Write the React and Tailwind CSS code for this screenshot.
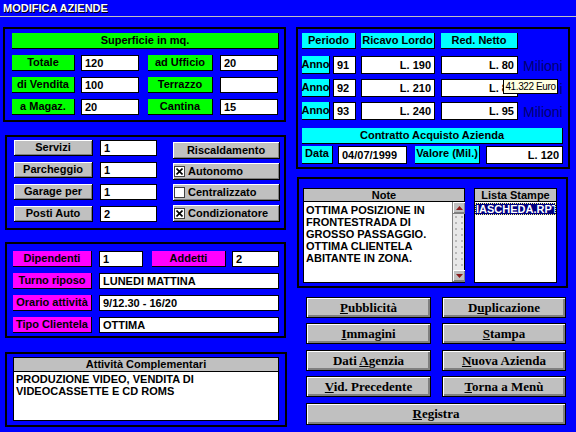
// Modifica Aziende — Win3.x style data entry form
const sans = "font-['Liberation_Sans',Arial,sans-serif]"
const serif = "font-['Liberation_Serif','Times_New_Roman',serif]"

function Tag({ className = '', children }) {
  return (
    <div className={`flex items-center justify-center border-r border-b border-black text-[11px] font-bold leading-none text-black whitespace-nowrap ${className}`}>
      {children}
    </div>
  )
}

function Raised({ className = '', children }) {
  return (
    <div className={`flex items-center bg-[#c0c0c0] border-r border-b border-black shadow-[inset_1px_1px_0_#fff,inset_-1px_-1px_0_#808080] text-[11px] font-bold leading-none text-black whitespace-nowrap ${className}`}>
      {children}
    </div>
  )
}

function Field({ className = '', right = false, children }) {
  return (
    <div className={`flex items-center bg-white border border-black px-[3px] text-[11px] font-bold leading-none text-black whitespace-nowrap overflow-hidden ${right ? 'justify-end' : ''} ${className}`}>
      {children}
    </div>
  )
}

function Check({ on }) {
  return (
    <div className="w-[11px] h-[11px] bg-white border border-[#404040] flex items-center justify-center mr-[3px]">
      {on && (
        <svg width="7" height="7" viewBox="0 0 7 7">
          <path d="M0.5 0.5 L6.5 6.5 M6.5 0.5 L0.5 6.5" stroke="#000" strokeWidth="1.6" />
        </svg>
      )}
    </div>
  )
}

function Btn({ className = '', children }) {
  return (
    <div className={`h-[21px] flex items-center justify-center bg-[#c0c0c0] border border-black shadow-[inset_1px_1px_0_#fff,inset_-2px_-2px_0_#808080] text-[13px] font-bold text-black ${serif} ${className}`}>
      <span>{children}</span>
    </div>
  )
}

function Arrow({ up }) {
  return (
    <div className="w-[12px] h-[12px] bg-[#c0c0c0] border-b border-[#808080] shadow-[inset_1px_1px_0_#fff,inset_-1px_-1px_0_#808080] flex items-center justify-center">
      <svg width="7" height="4" viewBox="0 0 7 4">
        <polygon points={up ? '0,4 7,4 3.5,0' : '0,0 7,0 3.5,4'} fill="#8b1a1a" />
      </svg>
    </div>
  )
}

export default function App() {
  return (
    <div className={`relative w-[576px] h-[432px] overflow-hidden bg-[#0000ff] ${sans}`}>
      {/* Title */}
      <div className="h-[16px] pl-[3px] flex items-center text-[11px] font-bold text-white [text-shadow:1px_1px_0_#000]">
        MODIFICA AZIENDE
      </div>
      <div className="h-px bg-[#c0c0c0]" />

      <div className="flex">
        {/* Left column */}
        <div className="w-[296px] flex flex-col">
          {/* Superficie */}
          <section className="mt-[10px] ml-[3px] w-[283px] h-[95px] border-2 border-black pl-[7px] pr-[5px] pt-[4px] flex flex-col gap-[6px]">
            <Tag className="h-[16px] bg-[#00ff00]">Superficie in mq.</Tag>
            {[
              ['Totale', '120', 'ad Ufficio', '20'],
              ['di Vendita', '100', 'Terrazzo', ''],
              ['a Magaz.', '20', 'Cantina', '15'],
            ].map(([a, b, c, d]) => (
              <div key={a} className="flex h-[16px]">
                <Tag className="w-[63px] bg-[#00ff00]">{a}</Tag>
                <Field className="ml-[6px] w-[58px]">{b}</Field>
                <Tag className="ml-[9px] w-[65px] bg-[#00ff00]">{c}</Tag>
                <Field className="ml-[7px] w-[58px]">{d}</Field>
              </div>
            ))}
          </section>

          {/* Servizi */}
          <section className="mt-[13px] ml-[5px] w-[281px] h-[95px] border-2 border-black pl-[7px] pt-[3px] flex">
            <div className="flex flex-col gap-[6px]">
              {[
                ['Servizi', '1'],
                ['Parcheggio', '1'],
                ['Garage per', '1'],
                ['Posti Auto', '2'],
              ].map(([a, b]) => (
                <div key={a} className="flex h-[16px]">
                  <Raised className="w-[79px] justify-center">{a}</Raised>
                  <Field className="ml-[7px] w-[57px]">{b}</Field>
                </div>
              ))}
            </div>
            <div className="ml-[16px] mt-[2px] w-[107px] flex flex-col gap-[4px]">
              <Raised className="h-[17px] justify-center">Riscaldamento</Raised>
              {[
                ['Autonomo', true],
                ['Centralizzato', false],
                ['Condizionatore', true],
              ].map(([a, on]) => (
                <Raised key={a} className="h-[17px] pl-[1px]">
                  <Check on={on} />
                  {a}
                </Raised>
              ))}
            </div>
          </section>

          {/* Dipendenti */}
          <section className="mt-[12px] ml-[5px] w-[281px] h-[96px] border-2 border-black pl-[6px] pt-[7px] flex flex-col gap-[6px]">
            <div className="flex h-[16px]">
              <Tag className="w-[79px] bg-[#ff00ff]">Dipendenti</Tag>
              <Field className="ml-[7px] w-[44px]">1</Field>
              <Tag className="ml-[9px] w-[74px] bg-[#ff00ff]">Addetti</Tag>
              <Field className="ml-[6px] w-[47px]">2</Field>
            </div>
            {[
              ['Turno riposo', 'LUNEDI MATTINA'],
              ['Orario attività', '9/12.30 - 16/20'],
              ['Tipo Clientela', 'OTTIMA'],
            ].map(([a, b]) => (
              <div key={a} className="flex h-[16px]">
                <Tag className="w-[79px] bg-[#ff00ff]">{a}</Tag>
                <Field className="ml-[7px] w-[180px]">{b}</Field>
              </div>
            ))}
          </section>

          {/* Attività complementari */}
          <section className="mt-[14px] ml-[5px] w-[282px] h-[75px] border-2 border-black px-[6px] pt-[3px]">
            <div className="h-[15px] bg-[#c0c0c0] border border-black flex items-center justify-center text-[11px] font-bold">
              Attività Complementari
            </div>
            <div className="h-[49px] bg-white border border-t-0 border-black px-[2px] pt-[1px] text-[11px] font-bold leading-[12px]">
              PRODUZIONE VIDEO, VENDITA DI
              <br />
              VIDEOCASSETTE E CD ROMS
            </div>
          </section>
        </div>

        {/* Right column */}
        <div className="flex flex-col">
          {/* Ricavi */}
          <section className="mt-[10px] w-[274px] h-[142px] border-2 border-black pl-[4px] pt-[4px] flex flex-col">
            <div className="flex h-[16px]">
              <Tag className="w-[54px] bg-[#00ffff]">Periodo</Tag>
              <Tag className="ml-[5px] w-[74px] bg-[#00ffff]">Ricavo Lordo</Tag>
              <Tag className="ml-[6px] w-[77px] bg-[#00ffff]">Red. Netto</Tag>
            </div>
            {[
              ['91', 'L. 190', 'L. 80'],
              ['92', 'L. 210', 'L. 85'],
              ['93', 'L. 240', 'L. 95'],
            ].map(([y, a, b], i) => (
              <div key={y} className={`flex h-[18px] ${i === 0 ? 'mt-[7px]' : 'mt-[5px]'}`}>
                <Tag className="w-[28px] bg-[#00ffff]">Anno</Tag>
                <Field className="ml-[3px] w-[23px]">{y}</Field>
                <Field right className="ml-[5px] w-[74px]">{a}</Field>
                <Field right className="ml-[6px] w-[77px]">{b}</Field>
                <span className="ml-[5px] mt-[2px] text-[14px] leading-none text-[#000070] self-center">Milioni</span>
              </div>
            ))}
            <Tag className="mt-[8px] w-[261px] h-[16px] bg-[#00ffff]">Contratto Acquisto Azienda</Tag>
            <div className="mt-[2px] flex h-[18px]">
              <Tag className="w-[31px] bg-[#00ffff] !items-start pt-[2px]">Data</Tag>
              <Field className="ml-[5px] w-[69px]">04/07/1999</Field>
              <Tag className="ml-[8px] w-[65px] bg-[#00ffff] !items-start pt-[2px]">Valore (Mil.)</Tag>
              <Field right className="ml-[6px] w-[77px]">L. 120</Field>
            </div>
          </section>

          {/* Note */}
          <section className="mt-[8px] ml-px w-[271px] h-[111px] border-2 border-black pl-[4px] pt-[9px] flex">
            <div className="w-[162px]">
              <div className="h-[14px] bg-[#c0c0c0] border border-black flex items-center justify-center text-[11px] font-bold">
                Note
              </div>
              <div className="h-[81px] bg-white border border-t-0 border-black flex">
                <div className="flex-1 px-[2px] pt-[2px] text-[11px] font-bold leading-[12px]">
                  OTTIMA POSIZIONE IN
                  <br />
                  FRONTESTRADA DI
                  <br />
                  GROSSO PASSAGGIO.
                  <br />
                  OTTIMA CLIENTELA
                  <br />
                  ABITANTE IN ZONA.
                </div>
                <div className="w-[12px] flex flex-col border-l border-[#808080]">
                  <Arrow up />
                  <div className="flex-1 bg-[#e8e8e8] bg-[radial-gradient(#b8b8b8_1px,transparent_1.2px)] bg-[length:6px_6px]" />
                  <Arrow />
                </div>
              </div>
            </div>
            <div className="ml-[9px] w-[83px]">
              <div className="h-[14px] bg-[#c0c0c0] border border-black flex items-center justify-center text-[11px] font-bold">
                Lista Stampe
              </div>
              <div className="h-[81px] bg-white border border-t-0 border-black overflow-hidden">
                <div className="mt-px h-[12px] bg-[#000080] border border-dotted border-[#ffff80] text-white text-[11px] font-bold leading-[10px] whitespace-nowrap overflow-hidden">
                  IASCHEDA.RPT
                </div>
              </div>
            </div>
          </section>

          {/* Buttons */}
          <div className="mt-[9px] ml-[10px] w-[260px] flex flex-col">
            <div className="flex gap-[11px]">
              <Btn className="w-[125px]"><u>P</u>ubblicità</Btn>
              <Btn className="w-[124px]">D<u>u</u>plicazione</Btn>
            </div>
            <div className="mt-[5px] flex gap-[11px]">
              <Btn className="w-[125px]"><u>I</u>mmagini</Btn>
              <Btn className="w-[124px]"><u>S</u>tampa</Btn>
            </div>
            <div className="mt-[6px] flex gap-[11px]">
              <Btn className="w-[125px]">Dati <u>A</u>genzia</Btn>
              <Btn className="w-[124px]"><u>N</u>uova Azienda</Btn>
            </div>
            <div className="mt-[5px] flex gap-[11px]">
              <Btn className="w-[125px]"><u>V</u>id. Precedente</Btn>
              <Btn className="w-[124px]"><u>T</u>orna a Menù</Btn>
            </div>
            <Btn className="mt-[6px] w-[260px] !h-[22px]"><u>R</u>egistra</Btn>
          </div>
        </div>
      </div>

      {/* Tooltip over the second row */}
      <div className="absolute left-[503px] top-[79px] h-[15px] w-[55px] bg-[#ffffe1] border border-black flex items-center justify-center text-[10px] tracking-[-0.4px] leading-none text-black whitespace-nowrap">
        41.322 Euro
      </div>
    </div>
  )
}
